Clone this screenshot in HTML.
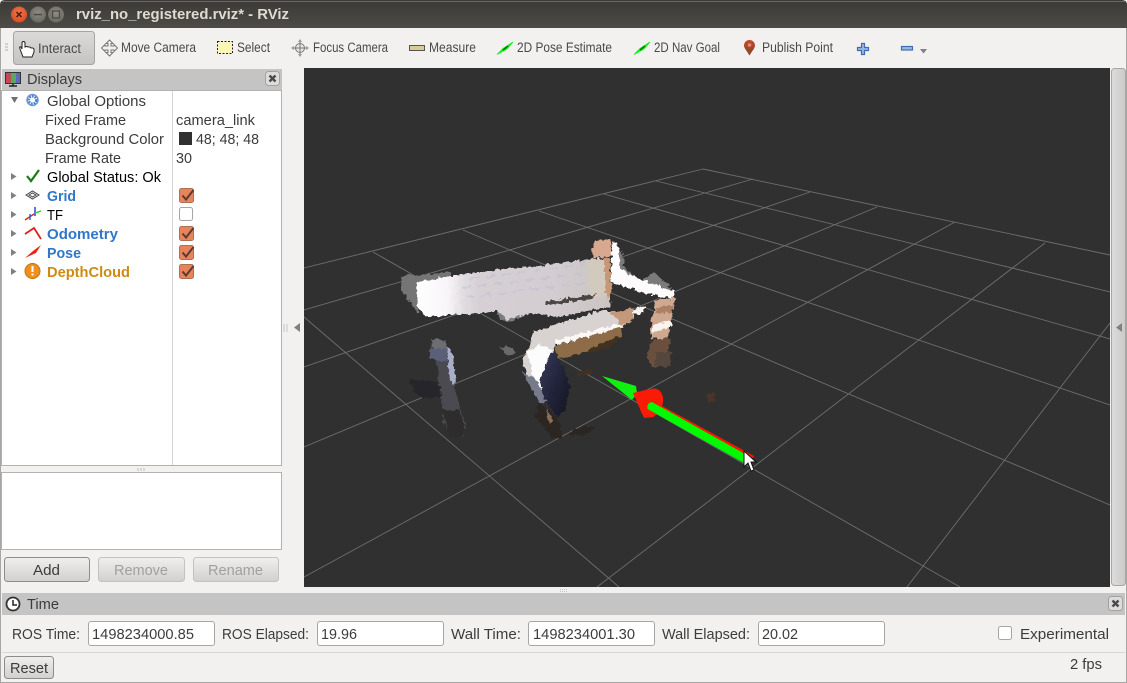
<!DOCTYPE html>
<html><head><meta charset="utf-8"><title>rviz_no_registered.rviz* - RViz</title>
<style>
html,body{margin:0;padding:0;background:#f2f1f0;overflow:hidden}
svg{display:block}
text{font-family:"Liberation Sans",sans-serif;font-size:14.5px;fill:#3c3c3c}
.tb{font-size:13.5px;fill:#4a4a4a}
.b{font-weight:bold}
.g{fill:#a0a0a0}
.grid line{stroke:#6e6e6e;stroke-width:.9}
</style></head><body>
<svg xmlns="http://www.w3.org/2000/svg" width="1127" height="683" viewBox="0 0 1127 683">
<defs>
<linearGradient id="tbar" x1="0" y1="0" x2="0" y2="1"><stop offset="0" stop-color="#3b3a36"/><stop offset="1" stop-color="#4c4b46"/></linearGradient>
<linearGradient id="ib" x1="0" y1="0" x2="0" y2="1"><stop offset="0" stop-color="#dcdad8"/><stop offset="1" stop-color="#c6c4c2"/></linearGradient>
<linearGradient id="btn" x1="0" y1="0" x2="0" y2="1"><stop offset="0" stop-color="#f0efee"/><stop offset="1" stop-color="#d2d0ce"/></linearGradient>
<linearGradient id="side" x1="0" y1="0" x2="1" y2="0"><stop offset="0" stop-color="#dcdcdc"/><stop offset="1" stop-color="#cacaca"/></linearGradient>
<radialGradient id="cl" cx=".5" cy=".4" r=".6"><stop offset="0" stop-color="#f07a50"/><stop offset="1" stop-color="#dc4a20"/></radialGradient>
<radialGradient id="mn" cx=".5" cy=".4" r=".6"><stop offset="0" stop-color="#8e8c84"/><stop offset="1" stop-color="#6a6962"/></radialGradient>
<linearGradient id="wall" x1="0" y1="0" x2="1" y2="0"><stop offset="0" stop-color="#ffffff"/><stop offset=".16" stop-color="#f8f5f8"/><stop offset=".24" stop-color="#e0dce0"/><stop offset=".32" stop-color="#d6d0d4"/><stop offset=".7" stop-color="#d3ccd0"/><stop offset="1" stop-color="#cbc4c2"/></linearGradient>
<linearGradient id="navy" x1="0" y1="0" x2="1" y2="1"><stop offset="0" stop-color="#3a3c5c"/><stop offset=".5" stop-color="#22243c"/><stop offset="1" stop-color="#14141f"/></linearGradient>
<linearGradient id="pin" x1="0" y1="0" x2="0" y2="1"><stop offset="0" stop-color="#c8482a"/><stop offset="1" stop-color="#7a4a24"/></linearGradient>
<filter id="jag" x="-5%" y="-5%" width="110%" height="110%" color-interpolation-filters="sRGB"><feTurbulence type="fractalNoise" baseFrequency="0.22" numOctaves="2" seed="4"/><feDisplacementMap in="SourceGraphic" scale="6" xChannelSelector="R" yChannelSelector="G"/></filter>
<clipPath id="vp"><rect x="304" y="68" width="806" height="519"/></clipPath>
<symbol id="chk" viewBox="0 0 16 16"><rect x=".5" y=".5" width="14" height="14" rx="2" fill="#e8845c" stroke="#b07050"/><path d="M3.500 7.500 L7 11.500 L14.500 2" fill="none" stroke="#5a3c30" stroke-width="2"/></symbol>
<symbol id="clo" viewBox="0 0 16 16"><rect x=".5" y=".5" width="14" height="14" rx="3" fill="#dedcda" stroke="#a4a2a0"/><path d="M4.500 4.500 L10.500 10.500 M10.500 4.500 L4.500 10.500" stroke="#4a4a4a" stroke-width="2.400"/></symbol>
</defs>

<rect width="1127" height="683" fill="#f2f1f0"/>

<!-- title bar -->
<path d="M0 28 V5 Q0 0 5 0 H1122 Q1127 0 1127 5 V28 Z" fill="url(#tbar)"/>
<rect x="2" y="1" width="1123" height="1" fill="#6a6964"/>
<circle cx="19" cy="14.500" r="8" fill="url(#cl)"/>
<path d="M16.500 12 L21.500 17 M21.500 12 L16.500 17" stroke="#5a2010" stroke-width="1.600"/>
<circle cx="38" cy="14.500" r="8" fill="url(#mn)"/>
<rect x="34" y="13.800" width="8" height="1.500" fill="#4a4944"/>
<circle cx="56" cy="14.500" r="8" fill="url(#mn)"/>
<rect x="52.500" y="11" width="7" height="7" fill="none" stroke="#4a4944" stroke-width="1.200"/>
<text x="76" y="19" class="b" style="font-size:15px;fill:#dfdbd2" textLength="213" lengthAdjust="spacingAndGlyphs">rviz_no_registered.rviz* - RViz</text>

<!-- toolbar -->
<path d="M5 44h3M5 47h3M5 50h3" stroke="#c8c6c4" stroke-width="1.400"/>
<rect x="13.500" y="31.500" width="81" height="33" rx="3" fill="url(#ib)" stroke="#a6a4a2"/>
<path d="M20 49 Q19 46 21 47 L22 49 V43 Q22 41.500 23.500 41.500 Q25 41.500 25 43 V47 Q27 46 28 47 Q30 46.500 31 48 Q33 47.500 34 49 V52 L32 57 H23 Z" fill="#fff" stroke="#222" stroke-width="1"/>
<text x="38" y="53" class="tb" textLength="43" lengthAdjust="spacingAndGlyphs">Interact</text>
<g fill="#f0f0f0" stroke="#777" stroke-width="1"><path d="M109.500 40 L113 43.500 H111 V46 H114 V44.500 L117.500 48 L114 51.500 V50 H111 V52.500 H113 L109.500 56 L106 52.500 H108 V50 H105 V51.500 L101.500 48 L105 44.500 V46 H108 V43.500 H106 Z"/></g>
<text x="121" y="52" class="tb" textLength="75" lengthAdjust="spacingAndGlyphs">Move Camera</text>
<rect x="217.500" y="41.500" width="15" height="12" fill="#fbf5b8" stroke="#222" stroke-dasharray="2 1.500"/>
<text x="237" y="52" class="tb" textLength="33" lengthAdjust="spacingAndGlyphs">Select</text>
<g fill="none" stroke="#777"><circle cx="300" cy="48" r="4.500" fill="#e8e8e8"/><path d="M300 40 V56 M292 48 H308"/></g>
<path d="M300 39l2 3h-4zM300 57l2-3h-4zM291 48l3 2v-4zM309 48l-3 2v-4z" fill="#999"/>
<text x="313" y="52" class="tb" textLength="75" lengthAdjust="spacingAndGlyphs">Focus Camera</text>
<rect x="409.500" y="45.500" width="15" height="5" fill="#d8cc96" stroke="#555"/>
<text x="429" y="52" class="tb" textLength="47" lengthAdjust="spacingAndGlyphs">Measure</text>
<path d="M497 54.500 L503 48.500 L513 42 L507 49 Z" fill="#14f01a" stroke="#14f01a" stroke-width=".8"/><path d="M503 50 L508 46" stroke="#0a6a10" stroke-width="1.400"/>
<text x="517" y="52" class="tb" textLength="95" lengthAdjust="spacingAndGlyphs">2D Pose Estimate</text>
<path d="M634 54.500 L640 48.500 L650 42 L644 49 Z" fill="#14f01a" stroke="#14f01a" stroke-width=".8"/><path d="M640 50 L645 46" stroke="#0a6a10" stroke-width="1.400"/>
<text x="654" y="52" class="tb" textLength="66" lengthAdjust="spacingAndGlyphs">2D Nav Goal</text>
<path d="M749.500 55.500 C746.500 50.500 744 48 744 45.500 A5.500 5.500 0 1 1 755 45.500 C755 48 752.500 50.500 749.500 55.500Z" fill="url(#pin)"/>
<circle cx="749.500" cy="45" r="1.800" fill="#e88a70"/>
<text x="762" y="52" class="tb" textLength="71" lengthAdjust="spacingAndGlyphs">Publish Point</text>
<path d="M861.500 43.500 h3 v4 h4 v3 h-4 v4 h-3 v-4 h-4 v-3 h4 Z" fill="#9ab8e4" stroke="#3f6db0" stroke-width="1.200"/>
<rect x="901.500" y="46.500" width="11" height="3.500" fill="#9ab8e4" stroke="#3f6db0" stroke-width="1.200"/>
<path d="M920 49 h7 l-3.500 4.500 Z" fill="#808080"/>

<!-- displays panel -->
<rect x="2" y="69" width="280" height="22" fill="#c4c4c4"/>
<rect x="5.500" y="72.500" width="15" height="11" fill="#777" stroke="#333"/>
<rect x="6" y="73" width="5" height="10" fill="#c04a58"/><rect x="11" y="73" width="5" height="10" fill="#58a860"/><rect x="16" y="73" width="4" height="10" fill="#6068b8"/>
<path d="M9 86h8M13 84v2" stroke="#222" stroke-width="1.500"/>
<text x="27" y="84" textLength="55" lengthAdjust="spacingAndGlyphs">Displays</text>
<use href="#clo" x="265" y="71" width="16" height="16"/>
<rect x="1.500" y="90.500" width="280" height="375" fill="#fff" stroke="#b4b2b0"/>
<rect x="172" y="91" width="1" height="374" fill="#d4d4d4"/>
<path d="M11 97 h7 l-3.500 6 Z" fill="#707070"/>
<g fill="#808080"><path d="M11 173 l5.500 3.500 l-5.500 3.500Z"/><path d="M11 192 l5.500 3.500 l-5.500 3.500Z"/><path d="M11 211 l5.500 3.500 l-5.500 3.500Z"/><path d="M11 230 l5.500 3.500 l-5.500 3.500Z"/><path d="M11 249 l5.500 3.500 l-5.500 3.500Z"/><path d="M11 268 l5.500 3.500 l-5.500 3.500Z"/></g>
<circle cx="32.500" cy="100" r="4" fill="none" stroke="#4a80c8" stroke-width="3" stroke-dasharray="2 1"/>
<circle cx="32.500" cy="100" r="5.500" fill="none" stroke="#6a98d8" stroke-width="1.500"/>
<path d="M27 176 L31 181 L39 170" fill="none" stroke="#1a7a1a" stroke-width="2.200"/>
<path d="M26 195 L32.500 191 L39 195 L32.500 199 Z M29 195 L32.500 193 L36 195 L32.500 197 Z" fill="none" stroke="#444" stroke-width="1"/>
<path d="M25 220 L34 214" stroke="#e02020" stroke-width="1.400"/><path d="M35 207 V216" stroke="#2030e0" stroke-width="1.400"/><path d="M35 213 L41 211" stroke="#20d020" stroke-width="1.400"/><path d="M30 214 V220" stroke="#2060e0" stroke-width="1.400"/>
<path d="M25 234 L34 228 L41 239" fill="none" stroke="#e02018" stroke-width="1.800"/>
<path d="M25 258 L33 251 L41 245 L36 253 Z" fill="#f02018"/>
<circle cx="32.500" cy="271" r="7.500" fill="#f0901c" stroke="#c87010"/>
<rect x="31.500" y="266" width="2" height="6" fill="#fff"/><rect x="31.500" y="273.500" width="2" height="2" fill="#fff"/>

<text x="47" y="106" textLength="99" lengthAdjust="spacingAndGlyphs">Global Options</text>
<text x="45" y="125" textLength="81" lengthAdjust="spacingAndGlyphs">Fixed Frame</text>
<text x="45" y="144" textLength="119" lengthAdjust="spacingAndGlyphs">Background Color</text>
<text x="45" y="163" textLength="76" lengthAdjust="spacingAndGlyphs">Frame Rate</text>
<text x="47" y="182" style="fill:#000" textLength="114" lengthAdjust="spacingAndGlyphs">Global Status: Ok</text>
<text x="47" y="201" class="b" style="fill:#2f78c8" textLength="29" lengthAdjust="spacingAndGlyphs">Grid</text>
<text x="47" y="220" style="fill:#000" textLength="16" lengthAdjust="spacingAndGlyphs">TF</text>
<text x="47" y="239" class="b" style="fill:#2f78c8" textLength="71" lengthAdjust="spacingAndGlyphs">Odometry</text>
<text x="47" y="258" class="b" style="fill:#2f78c8" textLength="34" lengthAdjust="spacingAndGlyphs">Pose</text>
<text x="47" y="277" class="b" style="fill:#cf8a10" textLength="83" lengthAdjust="spacingAndGlyphs">DepthCloud</text>
<text x="176" y="125" textLength="79" lengthAdjust="spacingAndGlyphs">camera_link</text>
<rect x="179" y="132" width="13" height="13" fill="#303030"/>
<text x="196" y="144" textLength="63" lengthAdjust="spacingAndGlyphs">48; 48; 48</text>
<text x="176" y="163" textLength="16" lengthAdjust="spacingAndGlyphs">30</text>
<use href="#chk" x="179" y="188" width="16" height="16"/>
<rect x="179.500" y="207.500" width="13" height="13" rx="2" fill="#fff" stroke="#a8a6a4"/>
<use href="#chk" x="179" y="226" width="16" height="16"/>
<use href="#chk" x="179" y="245" width="16" height="16"/>
<use href="#chk" x="179" y="264" width="16" height="16"/>

<path d="M138 468v3M141 468v3M144 468v3" stroke="#c0bebc"/>
<rect x="1.500" y="472.500" width="280" height="77" fill="#fff" stroke="#b4b2b0"/>
<rect x="4.500" y="557.500" width="85" height="24" rx="3" fill="url(#btn)" stroke="#8e8c8a"/>
<text x="33" y="575" textLength="27" lengthAdjust="spacingAndGlyphs">Add</text>
<rect x="98.500" y="557.500" width="86" height="24" rx="3" fill="url(#btn)" stroke="#c4c2c0"/>
<text x="114" y="575" class="g" textLength="54" lengthAdjust="spacingAndGlyphs">Remove</text>
<rect x="193.500" y="557.500" width="85" height="24" rx="3" fill="url(#btn)" stroke="#c4c2c0"/>
<text x="208" y="575" class="g" textLength="55" lengthAdjust="spacingAndGlyphs">Rename</text>

<path d="M284 324v8M287 324v8" stroke="#c8c6c4"/>
<path d="M300 323 v9 l-6 -4.500 Z" fill="#808080"/>

<!-- viewport -->
<rect x="304" y="68" width="806" height="519" fill="#303030"/>
<g clip-path="url(#vp)">
<g class="grid">
<line x1="703" y1="169" x2="1110" y2="255"/>
<line x1="656" y1="181" x2="1110" y2="292"/>
<line x1="604" y1="194" x2="1110" y2="339"/>
<line x1="539" y1="211" x2="1110" y2="405"/>
<line x1="463" y1="230" x2="1110" y2="505"/>
<line x1="373" y1="252" x2="960" y2="587"/>
<line x1="304" y1="317" x2="619" y2="587"/>
<line x1="304" y1="268" x2="703" y2="169"/>
<line x1="304" y1="310" x2="753" y2="179"/>
<line x1="304" y1="367" x2="810" y2="192"/>
<line x1="304" y1="447" x2="877" y2="207"/>
<line x1="304" y1="577" x2="955" y2="222"/>
<line x1="597" y1="587" x2="1045" y2="243"/>
<line x1="907" y1="587" x2="1110" y2="323"/>
</g>
<!-- point cloud -->
<g filter="url(#jag)" shape-rendering="crispEdges">
<!-- halos -->
<path d="M401 276 L451 272 L450 282 L418 302 L418 314 L401 290 Z" fill="#757575"/>
<path d="M612 240 L622 252 L624 268 L640 280 L655 272 L668 286 L676 292 L640 286 L615 272 Z" fill="#7a7a7a"/>
<path d="M497 308 L530 313 L510 322 L500 320 Z" fill="#7c7a78"/>
<path d="M501 347 L512 347 L517 354 L507 355 Z" fill="#6a6a6a"/>
<!-- wall -->
<path d="M417 282 L451 276 L504 269 L537 266 L575 261 L604 258 L611 290 L610 307 L557 317 L530 313 L507 320 L497 311 L470 314 L427 316 L417 307 Z" fill="url(#wall)"/>
<path d="M586 261 L604 258 L606 296 L590 299 Z" fill="#d2cabd"/>
<path d="M604 258 L610 257 L611 296 L606 299 Z" fill="#c89874"/>
<path d="M595 240 L610 240 L612 255 L593 259 L592 250 Z" fill="#d8a890"/>
<path d="M545 302 L596 294 L592 299 L548 305 Z" fill="#4a4644"/>
<g stroke="#bcbcd6" stroke-width="2" stroke-dasharray="9 7" opacity=".45" fill="none"><path d="M462 288 L586 273"/><path d="M466 297 L586 283"/><path d="M470 279 L586 264"/></g>
<!-- white strip -->
<path d="M612 243 L619 246 L621 270 L640 279 L674 291 L674 299 L640 292 L611 282 Z" fill="#fdfbfb"/>
<path d="M632 310 L645 306 L644 313 L632 315 Z" fill="#f6f2ee"/>
<!-- right post -->
<path d="M656 300 L675 298 L672 316 L668 340 L652 338 L650 330 Z" fill="#cfa890"/>
<path d="M653 324 L672 320 L671 328 L652 332 Z" fill="#f8f4f0"/>
<path d="M656 308 L673 306 L673 312 L656 314 Z" fill="#ad8066"/>
<path d="M651 340 L670 338 L667 358 L672 366 L652 367 L647 358 Z" fill="#6a4e3e"/>
<path d="M657 352 L672 352 L670 366 L654 366 Z" fill="#55463e"/>
<!-- couch -->
<path d="M533 332 L570 320 L603 310 L624 312 L634 316 L622 328 L590 336 L557 342 L553 350 L548 380 L540 392 L526 375 L523 358 L530 345 Z" fill="#d8d2d0"/>
<path d="M556 340 L620 324 L622 327 L557 345 Z" fill="#fbf7f4"/>
<path d="M610 312 L633 308 L632 322 L622 325 Z" fill="#c4987a"/>
<path d="M555 346 L620 327 L622 336 L593 350 L565 357 L558 358 Z" fill="#8e6c48"/>
<path d="M590 348 L622 335 L612 346 L588 354 Z" fill="#40321f"/>
<path d="M527 352 L540 345 L551 350 L541 382 L545 400 L534 380 Z" fill="#fdfcfc"/>
<path d="M522 372 L535 378 L548 402 L538 402 Z" fill="#777a8a"/>
<path d="M576 372 L595 368 L592 375 L578 376 Z" fill="#3e3126"/>
<!-- lens -->
<path d="M553 350 L564 368 L570 388 L565 410 L557 418 L544 398 L540 382 L546 364 Z" fill="url(#navy)"/>
<path d="M538 402 L553 414 L560 424 L562 438 L552 438 L545 428 L535 418 Z" fill="#2c2622"/>
<path d="M546 408 L553 420 L550 424 Z" fill="#8a6e58"/>
<path d="M568 433 L585 426 L596 427 L588 434 L572 436 Z" fill="#2a2624"/>
<!-- left slab -->
<path d="M432 338 L445 340 L450 352 L452 372 L458 400 L466 425 L463 438 L450 436 L443 420 L441 395 L437 365 L430 352 Z" fill="#4a4a50"/>
<path d="M447 346 L452 350 L456 385 L451 385 L448 365 Z" fill="#a8aec8"/>
<path d="M432 338 L446 341 L448 350 L433 350 Z" fill="#6c6e72"/>
<path d="M428 349 L447 349 L447 362 L432 360 Z" fill="#5a6078"/>
<path d="M442 410 L460 410 L465 430 L462 438 L450 438 Z" fill="#2e2c2c"/>
<path d="M410 379 L438 382 L441 398 L424 398 L414 392 Z" fill="#25252b"/>
<path d="M706 394 L714 393 L715 400 L708 402 Z" fill="#4a3428"/>
</g>
<!-- arrow -->
<path d="M602 376 L636 386 L637 393 L632 400 Z" fill="#10f010"/>
<path d="M633 393 L650 389 L656 396 L654 417 L644 418 Z" fill="#fb1a06"/>
<ellipse cx="651.500" cy="403" rx="11" ry="15" transform="rotate(22 651.500 403)" fill="#fb1a06"/>
<path d="M652 400.500 L754 456 L752 459 L651 403 Z" fill="#ff1400"/>
<path d="M652 402 L753 458.500 L746 464 L647.500 409 Q646.500 403 652 402 Z" fill="#00fb00"/>
<!-- cursor -->
<path d="M744 451 V467 L748 463 L751 471 L754 470 L751 462 L756 462 Z" fill="#fff" stroke="#111" stroke-width="1"/>
</g>

<!-- right side panel -->
<rect x="1111.500" y="68.500" width="14" height="517" rx="3" fill="url(#side)" stroke="#a8a6a4"/>
<path d="M1122 323 v9 l-6 -4.500 Z" fill="#808080"/>
<path d="M560 589.500h8M560 591.500h8" stroke="#c8c6c4" stroke-dasharray="1 1"/>

<!-- time panel -->
<rect x="2" y="593" width="1123" height="22" fill="#c4c4c4"/>
<circle cx="13" cy="604" r="6.500" fill="#fff" stroke="#333" stroke-width="1.800"/>
<path d="M13 600 V605 H17" fill="none" stroke="#222" stroke-width="1.500"/>
<text x="27" y="609" textLength="32" lengthAdjust="spacingAndGlyphs">Time</text>
<use href="#clo" x="1108" y="596" width="16" height="16"/>

<text x="12" y="639" textLength="68" lengthAdjust="spacingAndGlyphs">ROS Time:</text>
<rect x="88.500" y="621.500" width="126" height="24" rx="2.500" fill="#fff" stroke="#a8a6a4"/>
<text x="92" y="639" textLength="102" lengthAdjust="spacingAndGlyphs">1498234000.85</text>
<text x="222" y="639" textLength="87" lengthAdjust="spacingAndGlyphs">ROS Elapsed:</text>
<rect x="317.500" y="621.500" width="126" height="24" rx="2.500" fill="#fff" stroke="#a8a6a4"/>
<text x="321" y="639" textLength="36" lengthAdjust="spacingAndGlyphs">19.96</text>
<text x="451" y="639" textLength="70" lengthAdjust="spacingAndGlyphs">Wall Time:</text>
<rect x="528.500" y="621.500" width="126" height="24" rx="2.500" fill="#fff" stroke="#a8a6a4"/>
<text x="533" y="639" textLength="102" lengthAdjust="spacingAndGlyphs">1498234001.30</text>
<text x="662" y="639" textLength="88" lengthAdjust="spacingAndGlyphs">Wall Elapsed:</text>
<rect x="758.500" y="621.500" width="126" height="24" rx="2.500" fill="#fff" stroke="#a8a6a4"/>
<text x="762" y="639" textLength="36" lengthAdjust="spacingAndGlyphs">20.02</text>
<rect x="998.500" y="626.500" width="13" height="13" rx="2" fill="#fff" stroke="#a8a6a4"/>
<text x="1020" y="639" textLength="89" lengthAdjust="spacingAndGlyphs">Experimental</text>
<rect x="2" y="652" width="1123" height="1" fill="#d8d6d4"/>
<rect x="4.500" y="656.500" width="49" height="22" rx="3" fill="url(#btn)" stroke="#8e8c8a"/>
<text x="10" y="673" textLength="38" lengthAdjust="spacingAndGlyphs">Reset</text>
<text x="1070" y="669" textLength="32" lengthAdjust="spacingAndGlyphs">2 fps</text>
<rect x="0" y="682" width="1127" height="1" fill="#a8a6a4"/>
<rect x="0" y="28" width="1" height="655" fill="#a8a6a4"/>
<rect x="1126" y="28" width="1" height="655" fill="#a8a6a4"/>
</svg>
</body></html>
